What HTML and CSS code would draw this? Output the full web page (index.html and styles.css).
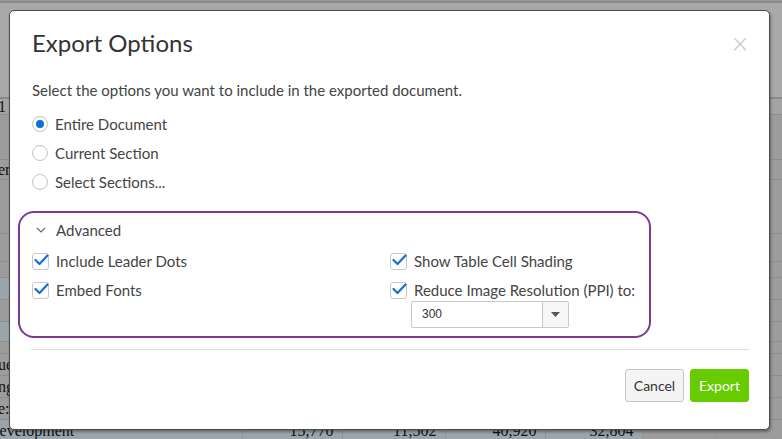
FILE: index.html
```html
<!DOCTYPE html>
<html>
<head>
<meta charset="utf-8">
<link rel="stylesheet" href="styles.css">
</head>
<body>
<div class="page">
  <div class="topbar"></div>
  <div class="bg-head"></div>
  <table class="bg-table">
    <colgroup>
      <col class="w1"><col class="w2"><col class="w3"><col class="w4"><col class="w5"><col class="w6"><col class="w7">
    </colgroup>
    <tr class="h16 first"><td class="c1">1</td><td></td><td></td><td></td><td></td><td></td><td></td></tr>
    <tr class="h45"><td class="c1"></td><td></td><td></td><td></td><td></td><td></td><td></td></tr>
    <tr class="h20"><td class="c1">er</td><td></td><td></td><td></td><td></td><td></td><td></td></tr>
    <tr class="h54"><td class="c1"></td><td></td><td></td><td></td><td></td><td></td><td></td></tr>
    <tr class="h28"><td class="c1"></td><td></td><td></td><td></td><td></td><td></td><td></td></tr>
    <tr class="h16"><td class="c1"></td><td></td><td></td><td></td><td></td><td></td><td></td></tr>
    <tr class="h22 blue"><td class="c1"></td><td></td><td></td><td></td><td></td><td class="gray"></td><td class="gray"></td></tr>
    <tr class="h22"><td class="c1"></td><td></td><td></td><td></td><td></td><td></td><td></td></tr>
    <tr class="h20 blue"><td class="c1"></td><td></td><td></td><td></td><td></td><td class="gray"></td><td class="gray"></td></tr>
    <tr class="h12"><td class="c1"></td><td></td><td></td><td></td><td></td><td></td><td></td></tr>
    <tr class="h22"><td class="c1">ue</td><td></td><td></td><td></td><td></td><td></td><td></td></tr>
    <tr class="h22"><td class="c1">ng</td><td></td><td></td><td></td><td></td><td></td><td></td></tr>
    <tr class="h22"><td class="c1">e:</td><td></td><td></td><td></td><td></td><td></td><td></td></tr>
    <tr class="h22 blue"><td class="c1 dev">Development</td><td>15,770</td><td>11,502</td><td>40,920</td><td>32,804</td><td class="gray"></td><td class="gray"></td></tr>
  </table>
</div>

<div class="modal">
  <div class="modal-header">
    <h1 class="title">Export Options</h1>
    <span class="close">&times;</span>
  </div>
  <div class="modal-body">
    <p class="intro">Select the options you want to include in the exported document.</p>
    <div class="radios">
      <label class="radio"><span class="radio-dot checked"></span>Entire Document</label>
      <label class="radio"><span class="radio-dot"></span>Current Section</label>
      <label class="radio"><span class="radio-dot"></span>Select Sections...</label>
    </div>
    <div class="advanced">
      <div class="adv-head">
        <svg class="chev" width="10" height="6" viewBox="0 0 10 6"><path d="M1 1 L5 5 L9 1" fill="none" stroke="#666" stroke-width="1.1"/></svg>
        <span>Advanced</span>
      </div>
      <div class="adv-grid">
        <div class="col">
          <label class="check"><span class="box"><svg width="15" height="12" viewBox="0 0 15 12"><path d="M1.5 6 L5.5 10 L13.5 1.5" fill="none" stroke="#1570d4" stroke-width="2.2" stroke-linecap="round" stroke-linejoin="round"/></svg></span>Include Leader Dots</label>
          <label class="check"><span class="box"><svg width="15" height="12" viewBox="0 0 15 12"><path d="M1.5 6 L5.5 10 L13.5 1.5" fill="none" stroke="#1570d4" stroke-width="2.2" stroke-linecap="round" stroke-linejoin="round"/></svg></span>Embed Fonts</label>
        </div>
        <div class="col">
          <label class="check"><span class="box"><svg width="15" height="12" viewBox="0 0 15 12"><path d="M1.5 6 L5.5 10 L13.5 1.5" fill="none" stroke="#1570d4" stroke-width="2.2" stroke-linecap="round" stroke-linejoin="round"/></svg></span>Show Table Cell Shading</label>
          <label class="check"><span class="box"><svg width="15" height="12" viewBox="0 0 15 12"><path d="M1.5 6 L5.5 10 L13.5 1.5" fill="none" stroke="#1570d4" stroke-width="2.2" stroke-linecap="round" stroke-linejoin="round"/></svg></span>Reduce Image Resolution (PPI) to:</label>
          <div class="select">
            <span class="select-val">300</span>
            <span class="select-btn"><svg width="9" height="5" viewBox="0 0 9 5"><path d="M0 0 L9 0 L4.5 5 Z" fill="#555"/></svg></span>
          </div>
        </div>
      </div>
    </div>
  </div>
  <div class="modal-footer">
    <button class="btn cancel">Cancel</button>
    <button class="btn export">Export</button>
  </div>
</div>
</body>
</html>
```

FILE: styles.css
```css
html, body {
  margin: 0;
  padding: 0;
  background: #9c9c9c;
}
body {
  width: 782px;
  height: 439px;
  overflow: hidden;
  font-family: Lato, "Open Sans", sans-serif;
  position: relative;
}
.page {
  width: 782px;
  height: 439px;
  display: flex;
  flex-direction: column;
  background: #9c9c9c;
}
.topbar {
  height: 2px;
  flex-shrink: 0;
  background: #8a8a8a;
  margin-top: 1px;
}
.bg-head {
  height: 94px;
  flex-shrink: 0;
  background: #a9a9a9;
}
.bg-table {
  border-collapse: collapse;
  table-layout: fixed;
  width: 782px;
  flex-shrink: 0;
  font-family: "Liberation Serif", serif;
  font-size: 16px;
  color: #111;
}
.w1 { width: 242px; }
.w2 { width: 100px; }
.w3 { width: 103px; }
.w4 { width: 100px; }
.w5 { width: 97px; }
.w6 { width: 73px; }
.w7 { width: 67px; }
.bg-table td {
  padding: 0 8px 0 0;
  border-top: 1px solid #8e8e8e;
  border-right: 1px solid #959595;
  background: #9c9c9c;
  text-align: right;
  white-space: nowrap;
  overflow: hidden;
  line-height: 12px;
  vertical-align: middle;
}
.h12 td { height: 11px; }
.h16 td { height: 15px; }
.h20 td { height: 19px; }
.h22 td { height: 21px; }
.h28 td { height: 27px; }
.h45 td { height: 44px; }
.h54 td { height: 53px; }
.bg-table tr.first td {
  border-top: 2px solid #8a8a8a;
  background: #a4a4a4;
}
.bg-table td.c1 {
  text-align: left;
  padding-left: 0;
  text-indent: -2px;
}
.bg-table td.dev {
  text-indent: -12px;
}
.bg-table tr.blue td {
  background: #9aa6ac;
}
.bg-table tr.blue td.gray {
  background: #9c9c9c;
}

.modal {
  position: absolute;
  left: 9px;
  top: 10px;
  width: 759px;
  height: 418px;
  background: #fff;
  border: 1px solid #4a4a4a;
  border-radius: 5px;
  box-shadow: 1px 2px 3px rgba(0,0,0,0.35);
  display: flex;
  flex-direction: column;
  color: #444;
}
.modal-header {
  display: flex;
  justify-content: space-between;
  align-items: flex-start;
  padding: 18px 22px 0 22px;
}
.title {
  margin: 0;
  font-size: 24px;
  font-weight: 400;
  color: #333;
  line-height: 28px;
}
.close {
  font-size: 24px;
  color: #c8c8c8;
  line-height: 24px;
  margin-top: 3px;
  margin-right: -3px;
  font-family: "DejaVu Sans", sans-serif;
  font-weight: 300;
}
.modal-body {
  padding: 0 22px;
  display: flex;
  flex-direction: column;
}
.intro {
  margin: 23px 0 0 0;
  font-size: 15px;
  line-height: 20px;
  color: #444;
}
.radios {
  display: flex;
  flex-direction: column;
  gap: 9px;
  margin-top: 14px;
}
.radio {
  display: flex;
  align-items: center;
  font-size: 15px;
  line-height: 20px;
  color: #444;
  height: 20px;
}
.radio-dot {
  width: 14px;
  height: 14px;
  border: 1px solid #c4c4c4;
  border-radius: 50%;
  margin-right: 7px;
  box-sizing: content-box;
  position: relative;
  background: #fff;
}
.radio-dot.checked::after {
  content: "";
  position: absolute;
  left: 3px;
  top: 3px;
  width: 8px;
  height: 8px;
  border-radius: 50%;
  background: #0b6fd6;
}
.advanced {
  margin: 19px 0 0 -14px;
  width: 617px;
  height: 123px;
  border: 2px solid #7e3993;
  border-radius: 16px;
  padding: 0 0 0 12px;
  box-sizing: content-box;
}
.adv-head {
  display: flex;
  align-items: center;
  height: 20px;
  margin-top: 7px;
  font-size: 15px;
  color: #444;
}
.chev {
  margin-left: 4px;
  margin-right: 10px;
}
.adv-grid {
  display: grid;
  grid-template-columns: 358px 1fr;
  margin-top: 11px;
}
.col {
  display: flex;
  flex-direction: column;
  gap: 9px;
}
.check {
  display: flex;
  align-items: center;
  height: 20px;
  font-size: 15px;
  color: #444;
}
.box {
  width: 15px;
  height: 15px;
  border: 1px solid #c8c8c8;
  border-radius: 3px;
  margin-right: 7px;
  position: relative;
  background: #fff;
}
.box svg {
  position: absolute;
  left: 1px;
  top: 0px;
}
.select {
  display: flex;
  margin-left: 21px;
  margin-top: -8px;
  width: 156px;
  height: 25px;
  border: 1px solid #c8c8c8;
  border-radius: 2px;
}
.select-val {
  flex: 1;
  font-family: "Liberation Sans", Arial, sans-serif;
  font-size: 12px;
  color: #333;
  line-height: 25px;
  padding-left: 10px;
}
.select-btn {
  width: 25px;
  border-left: 1px solid #c8c8c8;
  background: #f6f6f6;
  display: flex;
  align-items: center;
  justify-content: center;
}
.modal-footer {
  margin: 11px 20px 0 21px;
  border-top: 1px solid #dcdcdc;
  padding-top: 19px;
  display: flex;
  justify-content: flex-end;
  gap: 6px;
}
.btn {
  height: 33px;
  width: 59px;
  font-family: Lato, sans-serif;
  font-size: 14px;
  border-radius: 3px;
  padding: 0;
}
.cancel {
  background: #f4f4f4;
  border: 1px solid #c6c6c6;
  color: #333;
}
.export {
  background: #66cc00;
  border: 1px solid #66cc00;
  color: #fff;
}
```
